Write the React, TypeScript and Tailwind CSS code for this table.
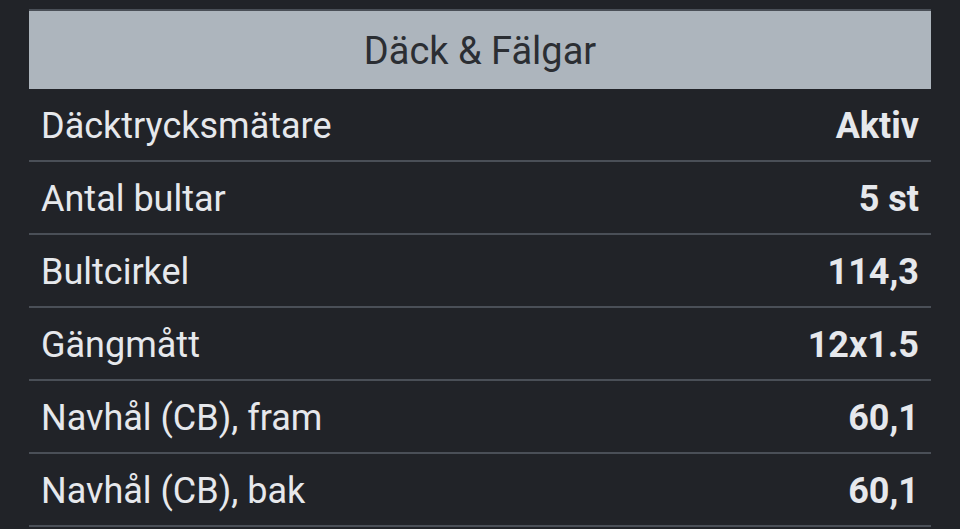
const rows: [string, string][] = [
  ['Däcktrycksmätare', 'Aktiv'],
  ['Antal bultar', '5 st'],
  ['Bultcirkel', '114,3'],
  ['Gängmått', '12x1.5'],
  ['Navhål (CB), fram', '60,1'],
  ['Navhål (CB), bak', '60,1'],
];

export default function App() {
  return (
    <div
      className="min-h-[529px] bg-[#212328] pl-[29px] pr-[29px] pt-[9px]"
      style={{ fontFamily: 'Roboto, "Noto Sans", sans-serif' }}
    >
      <div className="border-t-2 border-[#4a4f57] bg-[#adb5bd] h-[80px] pt-[3px] flex items-center justify-center text-[38px] text-[#2b2e33]">
        Däck &amp; Fälgar
      </div>
      <ul>
        {rows.map(([label, value], i) => (
          <li
            key={i}
            className="h-[73px] border-b-2 border-[#4a4f57] flex items-center justify-between px-3 pt-[3px] text-[36px] text-[#e6e8ec]"
          >
            <span>{label}</span>
            <span className="font-bold">{value}</span>
          </li>
        ))}
      </ul>
    </div>
  );
}
